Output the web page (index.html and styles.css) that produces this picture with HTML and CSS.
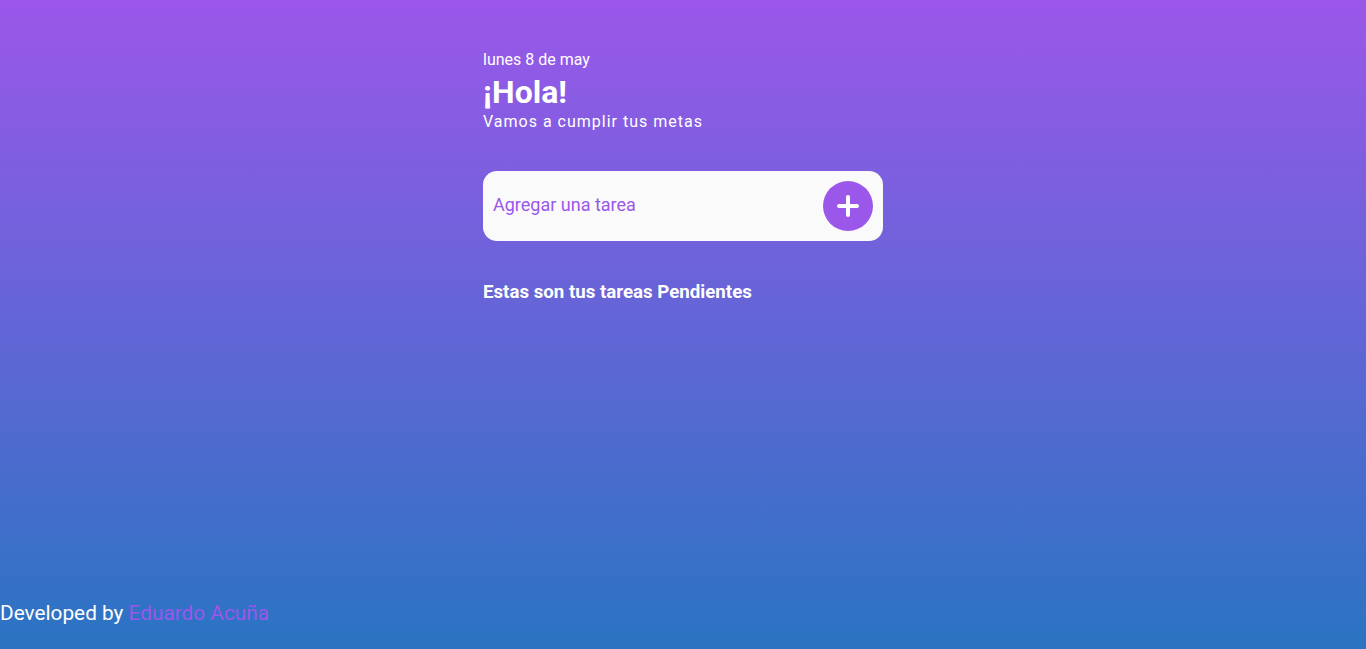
FILE: index.html
```html
<!DOCTYPE html>
<html lang="es">
<head>
<meta charset="utf-8">
<title>Todo</title>
<link rel="stylesheet" href="styles.css">
</head>
<body>
<main class="app">
  <header class="hero">
    <p class="date">lunes 8 de may</p>
    <h1 class="title">¡Hola!</h1>
    <p class="subtitle">Vamos a cumplir tus metas</p>
  </header>
  <form class="add-form">
    <input class="add-input" type="text" placeholder="Agregar una tarea">
    <button class="add-btn" type="button" aria-label="Agregar">
      <svg width="22" height="22" viewBox="0 0 22 22"><path d="M11 2v18M2 11h18" stroke="#fff" stroke-width="4" stroke-linecap="round"/></svg>
    </button>
  </form>
  <h2 class="pending">Estas son tus tareas Pendientes</h2>
</main>
<footer class="footer">Developed by <span class="author">Eduardo Acuña</span></footer>
</body>
</html>
```
FILE: styles.css
```css
* { box-sizing: border-box; }
html, body { height: 100%; }
body {
  margin: 0;
  font-family: Roboto, "Liberation Sans", sans-serif;
  color: #fff;
  background: linear-gradient(180deg, #9b57ea 0%, #2a74c2 100%);
  display: flex;
  flex-direction: column;
  min-height: 649px;
}
.app {
  width: 400px;
  margin: 0 auto;
  padding-top: 50px;
  flex: 1;
}
.hero { display: flex; flex-direction: column; }
.date { margin: 0; font-size: 16px; line-height: 19px; }
.title { margin: 6px 0 0; font-size: 32px; font-weight: 700; line-height: 34px; }
.subtitle { margin: 2px 0 0; font-size: 16px; line-height: 22px; letter-spacing: 1px; }
.add-form {
  margin-top: 38px;
  height: 70px;
  background: #fafafa;
  border-radius: 14px;
  display: flex;
  align-items: center;
  padding: 0 10px;
}
.add-input {
  flex: 1;
  border: none;
  background: transparent;
  outline: none;
  font-family: Roboto, "Liberation Sans", sans-serif;
  font-size: 18px;
  line-height: 22px;
  color: #9b57ea;
  padding: 0 0 2px;
}
.add-input::placeholder { color: #9b57ea; opacity: 1; }
.add-btn {
  width: 50px;
  height: 50px;
  border-radius: 50%;
  border: none;
  background: #9b57ea;
  display: flex;
  align-items: center;
  justify-content: center;
  padding: 0;
}
.pending { margin: 40px 0 0; font-size: 18.7px; font-weight: 700; line-height: 22px; }
.footer { font-size: 20.8px; line-height: 24px; padding-bottom: 24px; }
.author { color: #9b57ea; }
```
